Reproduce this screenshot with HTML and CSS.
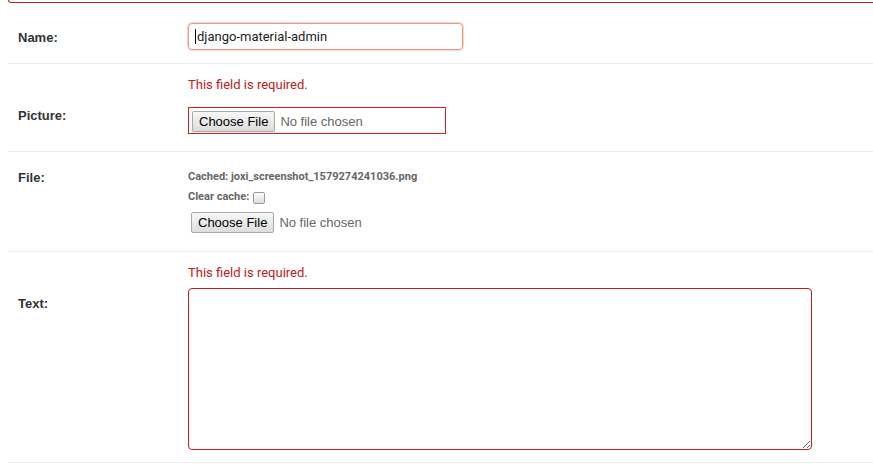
FILE: index.html
```html
<!DOCTYPE html>
<html lang="en">
<head>
<meta charset="utf-8">
<title>Change</title>
<link rel="stylesheet" href="styles.css">
</head>
<body>
<div class="errornote"></div>
<fieldset class="module">
  <div class="form-row row-name">
    <div class="line">
      <label class="label label-pad">Name:</label>
      <div class="field">
        <div class="text-input"><span class="caret"></span>django-material-admin</div>
      </div>
    </div>
  </div>
  <div class="form-row row-picture">
    <ul class="errorlist"><li>This field is required.</li></ul>
    <div class="line">
      <label class="label label-up">Picture:</label>
      <div class="field">
        <div class="file-box">
          <span class="file-btn">Choose File</span><span class="file-none">No file chosen</span>
        </div>
      </div>
    </div>
  </div>
  <div class="form-row row-file">
    <div class="line">
      <label class="label label-file">File:</label>
      <div class="field">
        <div class="cached">Cached: joxi_screenshot_1579274241036.png</div>
        <div class="cached">Clear cache:<span class="checkbox"></span></div>
        <div class="file-plain">
          <span class="file-btn">Choose File</span><span class="file-none">No file chosen</span>
        </div>
      </div>
    </div>
  </div>
  <div class="form-row row-text">
    <ul class="errorlist"><li>This field is required.</li></ul>
    <div class="line">
      <label class="label label-text">Text:</label>
      <div class="field">
        <textarea class="textarea" aria-label="Text"></textarea>
      </div>
    </div>
  </div>
</fieldset>
</body>
</html>
```
FILE: styles.css
```css
html, body {
  overflow: hidden;
}
body {
  margin: 0 0 0 8px;
  background: #fff;
  font-family: "Liberation Sans", Arial, sans-serif;
  font-size: 13px;
  color: #333;
}
.errornote {
  height: 2px;
  border: 1px solid #ba2121;
  border-top: 0;
  border-radius: 0 0 4px 4px;
  margin-right: -10px;
}
.module {
  margin: 10px 0 0 0;
  padding: 0;
  border: 0;
  min-width: 0;
}
.form-row {
  border-bottom: 1px solid #eee;
  padding: 10px 10px 10px 10px;
}
.row-name { padding-bottom: 13px; }
.row-picture { padding-bottom: 17px; }
.row-file { padding-top: 15px; padding-bottom: 18px; }
.row-text { padding-bottom: 12px; }
.errorlist {
  list-style: none;
  margin: 0 0 12px 170px;
  padding: 1px 0 0 0;
  font-family: Roboto, "Liberation Sans", sans-serif;
  font-size: 13px;
  line-height: 20px;
  color: #ba2121;
}
.row-text .errorlist { margin-bottom: 5px; }
.line {
  display: flex;
  align-items: flex-start;
}
.label {
  flex: 0 0 170px;
  font-weight: bold;
  font-size: 13px;
  line-height: 20px;
  color: #333;
}
.label-pad { padding-top: 5px; }
.label-text { padding-top: 6px; }
.label-file { padding-top: 1px; }
.label-up { margin-top: -1px; }
.field {
  flex: 1 1 auto;
  min-width: 0;
}
.text-input {
  box-sizing: border-box;
  width: 275px;
  height: 27px;
  padding: 0 6px;
  border: 1px solid #e49c86;
  border-radius: 4px;
  box-shadow: 0 0 1px 1px #f6d2c6;
  font-family: Roboto, "Liberation Sans", sans-serif;
  font-size: 13px;
  line-height: 25px;
  color: #222;
  display: flex;
  align-items: center;
}
.caret {
  display: inline-block;
  width: 1px;
  height: 15px;
  background: #000;
  margin-right: 1px;
}
.file-box {
  box-sizing: border-box;
  width: 258px;
  height: 27px;
  padding: 3px 3px 1px 3px;
  border: 1px solid #d41f1f;
  display: flex;
  align-items: flex-start;
}
.file-plain {
  display: flex;
  align-items: flex-start;
  margin: 5px 0 0 3px;
}
.file-btn {
  box-sizing: border-box;
  height: 21px;
  padding: 0 6px;
  border: 1px solid #a9a9a9;
  border-radius: 2px;
  background: linear-gradient(#f7f7f7, #dddddd);
  font-family: "Liberation Sans", Arial, sans-serif;
  font-size: 13px;
  line-height: 19px;
  color: #000;
  white-space: nowrap;
}
.file-none {
  margin-left: 5px;
  font-family: "Liberation Sans", Arial, sans-serif;
  font-size: 13px;
  line-height: 21px;
  color: #666;
  white-space: nowrap;
}
.cached {
  font-family: Roboto, "Liberation Sans", sans-serif;
  font-weight: bold;
  font-size: 11px;
  line-height: 20px;
  color: #666;
  display: flex;
  align-items: center;
}
.checkbox {
  display: inline-block;
  box-sizing: border-box;
  width: 12px;
  height: 12px;
  margin: 2px 0 0 4px;
  border: 1px solid #9a9a9a;
  border-radius: 2px;
  background: linear-gradient(#fcfcfc, #dedede);
}
.textarea {
  display: block;
  box-sizing: border-box;
  width: 624px;
  height: 162px;
  margin: 0;
  padding: 5px 6px;
  border: 1px solid #ba2121;
  border-radius: 4px;
  background: #fff;
  font-family: Roboto, "Liberation Sans", sans-serif;
  font-size: 13px;
  resize: both;
  outline: none;
}
```
